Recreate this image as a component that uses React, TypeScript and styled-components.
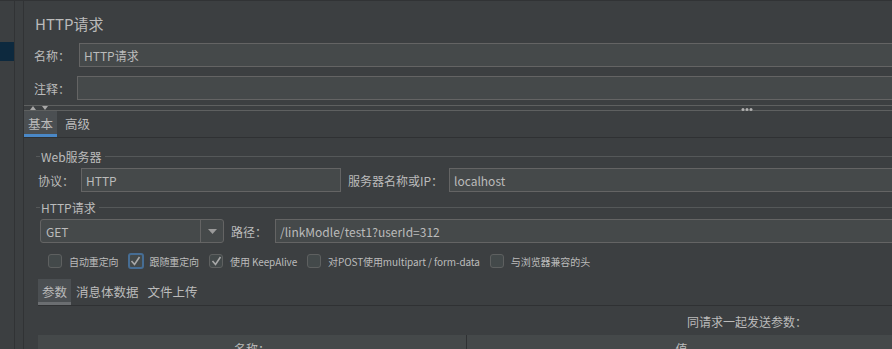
import React from 'react'
import styled, { createGlobalStyle, css } from 'styled-components'

const GlobalStyle = createGlobalStyle`
  html, body {
    margin: 0;
    padding: 0;
    background: #3c3f41;
    overflow: hidden;
  }
  body {
    font-family: "Noto Sans CJK SC", "Noto Sans", sans-serif;
    font-size: 12px;
    color: #bbbbbb;
  }
`;

function App() {
  return (
    <>
      <GlobalStyle />
      <Window>
        <SideTree>
          <TreeItem $selected />
        </SideTree>
        <Gutter />
        <Main>
          <Header>
            <Title>HTTP请求</Title>
            <FormRow $top={9}>
              <Label $width={45}>名称：</Label>
              <TextInput readOnly value="HTTP请求" />
            </FormRow>
            <FormRow $top={9}>
              <Label $width={43}>注释：</Label>
              <TextInput readOnly value="" />
            </FormRow>
          </Header>

          <Splitter>
            <Arrows>
              <svg width="6" height="4" viewBox="0 0 6 4"><polygon points="0,4 3,0 6,4" fill="#a8a8a8" /></svg>
              <svg width="6" height="4" viewBox="0 0 6 4"><polygon points="0,0 6,0 3,4" fill="#a8a8a8" /></svg>
            </Arrows>
            <Dots>
              <i /><i /><i />
            </Dots>
          </Splitter>

          <TabBar>
            <Tab $active $accent="#4a88c7">基本</Tab>
            <Tab>高级</Tab>
          </TabBar>

          <Panel>
            <GroupTitle $top={11}><span>Web服务器</span></GroupTitle>
            <FieldRow>
              <Label $width={43}>协议：</Label>
              <TextInput readOnly value="HTTP" $width={260} />
              <Label $width={101} $left={7}>服务器名称或IP：</Label>
              <TextInput readOnly value="localhost" />
            </FieldRow>

            <GroupTitle $top={8}><span>HTTP请求</span></GroupTitle>
            <FieldRow>
              <Combo>
                <ComboValue>GET</ComboValue>
                <ComboArrow>
                  <svg width="9" height="5" viewBox="0 0 9 5"><polygon points="0,0 9,0 4.5,5" fill="#9a9a9a" /></svg>
                </ComboArrow>
              </Combo>
              <Label $width={44} $left={7}>路径：</Label>
              <TextInput readOnly value="/linkModle/test1?userId=312" />
            </FieldRow>

            <CheckRow>
              <CheckItem label="自动重定向" />
              <CheckItem label="跟随重定向" checked focused />
              <CheckItem label="使用 KeepAlive" checked />
              <CheckItem label="对POST使用multipart / form-data" />
              <CheckItem label="与浏览器兼容的头" />
            </CheckRow>

            <SubTabBar>
              <Tab $active $accent="#6b6e71">参数</Tab>
              <Tab>消息体数据</Tab>
              <Tab>文件上传</Tab>
            </SubTabBar>

            <Caption>同请求一起发送参数：</Caption>
            <TableHead>
              <HeadCell>名称：</HeadCell>
              <HeadCell>值</HeadCell>
              <HeadCell />
            </TableHead>
          </Panel>
        </Main>
      </Window>
    </>
  );
}

function CheckItem({ label, checked, focused }: { label: string; checked?: boolean; focused?: boolean }) {
  return (
    <CheckWrap>
      <Box $focused={focused}>
        {checked && (
          <svg width="11" height="10" viewBox="0 0 11 10">
            <polyline points="1.5,5 4.5,8.5 9.5,1" fill="none" stroke="#a9a9a9" strokeWidth="1.6" />
          </svg>
        )}
      </Box>
      <CheckLabel>{label}</CheckLabel>
    </CheckWrap>
  );
}

const Window = styled.div`
  display: flex;
  width: 1470px;
  height: 349px;
  border-top: 1px solid #313335;
  box-sizing: border-box;
`;

const SideTree = styled.div`
  width: 14px;
  padding-top: 41px;
  border-right: 1px solid #313335;
  flex-shrink: 0;
`;

const TreeItem = styled.div<{ $selected?: boolean }>`
  height: 19px;
  background: ${({ $selected }) => ($selected ? '#0d293e' : 'transparent')};
`;

const Gutter = styled.div`
  width: 8px;
  border-right: 1px solid #313335;
  flex-shrink: 0;
`;

const Main = styled.div`
  flex: 1;
  display: flex;
  flex-direction: column;
  min-width: 0;
`;

const Header = styled.div`
  padding: 13px 0 0 10px;
`;

const Title = styled.div`
  font-size: 15px;
  line-height: 20px;
  padding-left: 1px;
`;

const FormRow = styled.div<{ $top: number }>`
  display: flex;
  align-items: center;
  margin-top: ${({ $top }) => $top}px;
`;

const Label = styled.span<{ $width: number; $left?: number }>`
  width: ${({ $width }) => $width}px;
  margin-left: ${({ $left }) => $left ?? 0}px;
  flex-shrink: 0;
  font-size: 12px;
  white-space: nowrap;
`;

const TextInput = styled.input<{ $width?: number }>`
  box-sizing: border-box;
  height: 24px;
  ${({ $width }) => ($width ? css`width: ${$width}px; flex-shrink: 0;` : css`flex: 1; min-width: 0;`)}
  background: #45494a;
  border: 1px solid #646464;
  color: #bbbbbb;
  font-family: inherit;
  font-size: 12px;
  padding: 0 4px;
  outline: none;
`;

const Splitter = styled.div`
  margin-top: 5px;
  height: 8px;
  border-top: 1px solid #5e6060;
  border-bottom: 1px solid #5e6060;
  display: flex;
  align-items: center;
  position: relative;
`;

const Arrows = styled.div`
  display: flex;
  gap: 6px;
  padding-left: 6px;
`;

const Dots = styled.div`
  position: absolute;
  left: 50%;
  top: 2px;
  display: flex;
  gap: 1px;
  transform: translateX(-50%);

  i {
    width: 3px;
    height: 3px;
    border-radius: 50%;
    background: #b0b0b0;
  }
`;

const TabBar = styled.div`
  display: flex;
  gap: 4px;
  border-bottom: 1px solid #2f3133;
`;

const Tab = styled.div<{ $active?: boolean; $accent?: string }>`
  box-sizing: border-box;
  height: 26px;
  padding: 1px 4px 0;
  display: flex;
  align-items: center;
  font-size: 12.5px;
  background: ${({ $active }) => ($active ? '#4b4f52' : 'transparent')};
  border-bottom: 3px solid ${({ $active, $accent }) => ($active ? $accent : 'transparent')};
`;

const Panel = styled.div`
  padding: 0 14px 0 12px;
  display: flex;
  flex-direction: column;
`;

const GroupTitle = styled.div<{ $top: number }>`
  margin-top: ${({ $top }) => $top}px;
  height: 14px;
  display: flex;
  align-items: center;
  font-size: 12px;

  &::before {
    content: '';
    width: 4px;
    border-top: 1px solid #555859;
    margin-right: 1px;
  }

  &::after {
    content: '';
    flex: 1;
    border-top: 1px solid #555859;
    margin-left: 3px;
  }
`;

const FieldRow = styled.div`
  display: flex;
  align-items: center;
  margin-top: 5px;
  padding-left: 2px;
`;

const Combo = styled.div`
  box-sizing: border-box;
  width: 184px;
  height: 24px;
  margin-left: 2px;
  display: flex;
  background: #45494a;
  border: 1px solid #646464;
  border-radius: 3px;
  flex-shrink: 0;
`;

const ComboValue = styled.div`
  flex: 1;
  display: flex;
  align-items: center;
  padding-left: 5px;
  font-size: 12px;
`;

const ComboArrow = styled.div`
  width: 22px;
  border-left: 1px solid #646464;
  display: flex;
  align-items: center;
  justify-content: center;
`;

const CheckRow = styled.div`
  display: flex;
  align-items: center;
  gap: 10px;
  margin-top: 10px;
  padding-left: 12px;
  height: 16px;
`;

const CheckWrap = styled.div`
  display: flex;
  align-items: center;
  gap: 7px;
`;

const Box = styled.div<{ $focused?: boolean }>`
  box-sizing: border-box;
  width: ${({ $focused }) => ($focused ? 16 : 14)}px;
  height: ${({ $focused }) => ($focused ? 16 : 14)}px;
  margin: ${({ $focused }) => ($focused ? '0 -1px' : '0')};
  border: ${({ $focused }) => ($focused ? '2px solid #466d94' : '1px solid #5e6060')};
  border-radius: 3px;
  background: #43494a;
  display: flex;
  align-items: center;
  justify-content: center;
`;

const CheckLabel = styled.span`
  font-size: 10px;
  white-space: nowrap;
  letter-spacing: -0.1px;
`;

const SubTabBar = styled.div`
  display: flex;
  gap: 1px;
  margin-top: 10px;
  margin-left: 2px;
  border-bottom: 1px solid #2f3133;
`;

const Caption = styled.div`
  text-align: center;
  margin-top: 9px;
  font-size: 12px;
  line-height: 14px;
  padding-left: 2px;
`;

const TableHead = styled.div`
  display: grid;
  grid-template-columns: 429px 430px 1fr;
  margin-top: 6px;
  margin-left: 2px;
  height: 22px;
  background: #45494a;
`;

const HeadCell = styled.div`
  text-align: center;
  font-size: 12px;
  padding-top: 5px;
  border-right: 1px solid #2f3133;
`;

export default App
